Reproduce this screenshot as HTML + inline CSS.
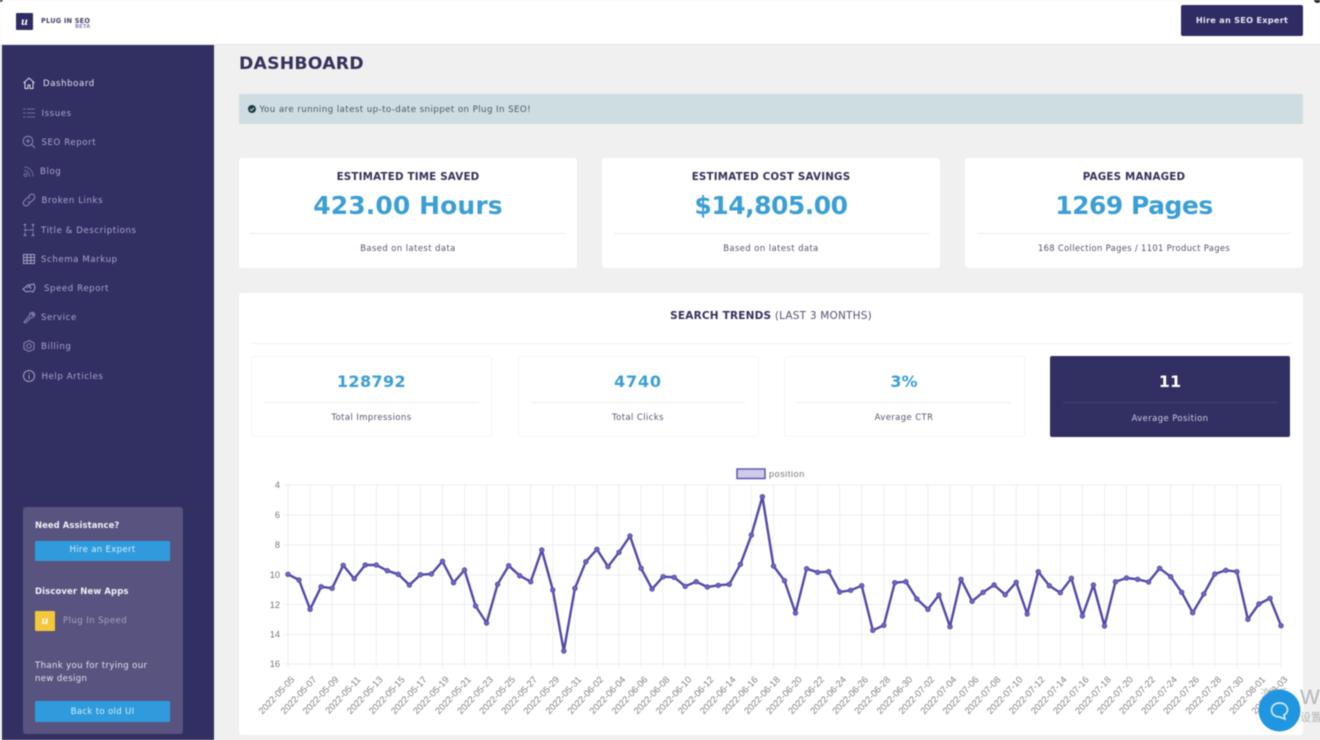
<!DOCTYPE html>
<html lang="en"><head><meta charset="utf-8"><title>Dashboard</title>
<style>
*{box-sizing:border-box}
html,body{margin:0;padding:0;width:1320px;height:740px;overflow:hidden;background:#f0f0f0}
#w{position:relative;width:1320px;height:740px;overflow:hidden;background:#f0f0f0;font-family:"DejaVu Sans","Liberation Sans",sans-serif;filter:blur(.5px)}
.a{position:absolute}
.t{position:absolute;white-space:nowrap;line-height:14px;height:14px}
.c{text-align:center}
.card{position:absolute;background:#fff;border-radius:3px}
.hr{position:absolute;height:1px;background:#ededf0}
.m{color:#a9a7c8;font-size:8.6px;letter-spacing:.58px;font-weight:500;margin-top:1px}
.ic{position:absolute;left:22px;width:14px;height:14px;fill:none;stroke:#a3a1c2;stroke-width:1}
.ct{font-size:10.3px;font-weight:700;color:#35325c;letter-spacing:.2px}
.val{font-size:25px;font-weight:700;color:#3c9fd4;line-height:30px;height:30px;letter-spacing:.1px}
.sub{font-size:8.4px;color:#55536f;letter-spacing:.45px}
.mc{position:absolute;top:356px;width:241px;height:81px;border:1px solid #f5f5f7;border-radius:3px;background:#fff}
.mv{font-size:16px;font-weight:700;color:#3c9fd4;line-height:20px;height:20px;letter-spacing:.1px}
.btn{position:absolute;background:#2f9bdc;border-radius:1px;color:#d4ecf8;font-size:8.6px;text-align:center;letter-spacing:.3px}
</style></head><body>
<div id="w">
<!-- header -->
<div class="a" style="left:0;top:0;width:1320px;height:45px;background:#fff;border-bottom:1px solid #e8e8ec"></div>
<div class="a" style="left:16px;top:13px;width:17px;height:17px;background:#2f2b63;border-radius:1px;color:#fff;font:italic 700 12px/16px 'Liberation Serif',serif;text-align:center">u</div>
<div class="t" style="left:41px;top:14px;font-size:6.6px;font-weight:700;color:#45436a;letter-spacing:.2px">PLUG IN SEO</div>
<div class="t" style="left:75px;top:20px;font-size:5.200px;font-weight:700;color:#8a86b8;letter-spacing:.2px">BETA</div>
<div class="a" style="left:1181px;top:5px;width:122px;height:31px;background:#2f2b63;border-radius:2px;color:#e7e6f2;font-size:8.200px;font-weight:700;text-align:center;line-height:31px;letter-spacing:.25px">Hire an SEO Expert</div>
<div class="a" style="left:1314px;top:-3px;width:7px;height:6px;background:#222;border-radius:50%"></div>
<div class="a" style="left:-3px;top:-3px;width:6px;height:5px;background:#222;border-radius:50%"></div>

<!-- sidebar -->
<div class="a" style="left:2px;top:45px;width:211.500px;height:695px;background:#322f63"></div>
<svg class="ic" style="top:76px;stroke:#dcdbe9" viewBox="0 0 14 14"><path d="M1.500 7 7 2l5.500 5M3 6v6.500h3V9h2v3.500h3V6"/></svg>
<div class="t m" style="left:43px;top:76px;color:#e4e3ef">Dashboard</div>
<svg class="ic" style="top:106px;stroke:#6f6c9c" viewBox="0 0 14 14"><path d="M5 3h8M5 7h8M5 11h8M1 3h2.500M1 7h2.500M1 11h2.500"/></svg>
<div class="t m" style="left:41.500px;top:106px">Issues</div>
<svg class="ic" style="top:135px;stroke:#8d8ab2" viewBox="0 0 14 14"><circle cx="6" cy="6" r="4.800"/><path d="m9.500 9.500 3.500 3.500M4 6h4M6 4v4"/></svg>
<div class="t m" style="left:41.500px;top:135px">SEO Report</div>
<svg class="ic" style="top:164px;stroke:#6f6c9c" viewBox="0 0 14 14"><path d="M2 3a9 9 0 0 1 9 9.500M2 6.500a5.500 5.500 0 0 1 5.500 6"/><circle cx="3.500" cy="11" r="1.500"/></svg>
<div class="t m" style="left:40px;top:164px">Blog</div>
<svg class="ic" style="top:193px;stroke:#8d8ab2" viewBox="0 0 14 14"><path d="m6 4 2-2a2.500 2.500 0 0 1 4 4L9.500 8.500a2.500 2.500 0 0 1-3.500 0M8 10l-2 2a2.500 2.500 0 0 1-4-4l2.500-2.500a2.500 2.500 0 0 1 3.500 0"/></svg>
<div class="t m" style="left:41.500px;top:193px">Broken Links</div>
<svg class="ic" style="top:222.500px;stroke:#8d8ab2" viewBox="0 0 14 14"><path d="M3 1.500v11M11 1.500v11M3 7h8M1.500 1.500h3M9.500 1.500h3M1.500 12.500h3M9.500 12.500h3" stroke-dasharray="3 1"/></svg>
<div class="t m" style="left:41px;top:222.500px">Title &amp; Descriptions</div>
<svg class="ic" style="top:251.500px;stroke:#a3a1c2" viewBox="0 0 14 14"><path d="M1.500 2.500h11v9h-11zM1.500 5.500h11M1.500 8.500h11M5 2.500v9M8.800 2.500v9"/></svg>
<div class="t m" style="left:41px;top:251.500px">Schema Markup</div>
<svg class="ic" style="top:281px;stroke:#a3a1c2" viewBox="0 0 14 14"><path d="M1 8c2-1 3-3 5-4l6-1 1 4-2 4-3-1-3 1-2-1zM5 7l3-2 1 3"/></svg>
<div class="t m" style="left:44px;top:281px">Speed Report</div>
<svg class="ic" style="top:310px;stroke:#8d8ab2" viewBox="0 0 14 14"><path d="m2 12 5.500-6a3 3 0 0 1 4-3.500L9.500 4.500l1 1 2-2A3 3 0 0 1 9 7.500L3.500 13z"/></svg>
<div class="t m" style="left:41px;top:310px">Service</div>
<svg class="ic" style="top:339px;stroke:#8d8ab2" viewBox="0 0 14 14"><path d="M7 1.500 12 4v6l-5 2.500L2 10V4z"/><circle cx="7" cy="7" r="2.200"/></svg>
<div class="t m" style="left:41px;top:339px">Billing</div>
<svg class="ic" style="top:368.500px;stroke:#a3a1c2" viewBox="0 0 14 14"><circle cx="7" cy="7" r="5.500"/><path d="M7 6v4M7 4v1"/></svg>
<div class="t m" style="left:41.500px;top:368.500px">Help Articles</div>

<!-- sidebar box -->
<div class="a" style="left:23px;top:507px;width:160px;height:227px;background:#58547f;border-radius:3px"></div>
<div class="t" style="left:35px;top:518px;font-size:8.400px;font-weight:700;color:#f0f0f6;letter-spacing:.1px">Need Assistance?</div>
<div class="btn" style="left:35px;top:541px;width:135px;height:20px;line-height:19px">Hire an Expert</div>
<div class="t" style="left:35px;top:585px;font-size:8.500px;font-weight:700;color:#f0f0f6;letter-spacing:.1px">Discover New Apps</div>
<div class="a" style="left:35px;top:611px;width:20px;height:20px;background:#f3c93b;border-radius:1px;color:#fff;font:italic 700 12px/19px 'Liberation Serif',serif;text-align:center">u</div>
<div class="t" style="left:63px;top:613.500px;font-size:8.600px;color:#a5a3bd;letter-spacing:.4px">Plug In Speed</div>
<div class="t" style="left:35px;top:659px;font-size:8.600px;color:#e2e1ec;letter-spacing:.33px">Thank you for trying our</div>
<div class="t" style="left:35px;top:672px;font-size:8.600px;color:#e2e1ec;letter-spacing:.33px">new design</div>
<div class="btn" style="left:35px;top:701px;width:135px;height:21px;line-height:22px">Back to old UI</div>

<!-- main -->
<div class="t" style="left:239px;top:53.500px;height:20px;line-height:20px;font-size:17.300px;font-weight:700;color:#35325c;letter-spacing:.2px">DASHBOARD</div>
<div class="a" style="left:239px;top:94px;width:1064px;height:30px;background:#cddde2;border-radius:2px"></div>
<div class="a" style="left:248px;top:105px;width:8px;height:8px;border-radius:50%;background:#1d3b42"></div>
<svg class="a" style="left:248px;top:105px" width="8" height="8" viewBox="0 0 8 8"><path d="M2 4.200 3.500 5.500 6 2.800" fill="none" stroke="#cddde2" stroke-width="1"/></svg>
<div class="t" style="left:259.500px;top:103px;font-size:8.700px;color:#4b5a62;letter-spacing:.4px">You are running latest up-to-date snippet on Plug In SEO!</div>

<div class="card" style="left:239px;top:158px;width:338px;height:110px"></div>
<div class="card" style="left:602px;top:158px;width:338px;height:110px"></div>
<div class="card" style="left:965px;top:158px;width:338px;height:110px"></div>
<div class="t c ct" style="left:239px;width:338px;top:169.500px">ESTIMATED TIME SAVED</div>
<div class="t c ct" style="left:602px;width:338px;top:169.500px">ESTIMATED COST SAVINGS</div>
<div class="t c ct" style="left:965px;width:338px;top:169.500px">PAGES MANAGED</div>
<div class="t c val" style="left:239px;width:338px;top:191px">423.00 Hours</div>
<div class="t c val" style="left:602px;width:338px;top:191px;letter-spacing:-.5px">$14,805.00</div>
<div class="t c val" style="left:965px;width:338px;top:191px;letter-spacing:-.5px">1269 Pages</div>
<div class="hr" style="left:250px;top:233px;width:315px"></div>
<div class="hr" style="left:614px;top:233px;width:315px"></div>
<div class="hr" style="left:977px;top:233px;width:314px"></div>
<div class="t c sub" style="left:239px;width:338px;top:241px">Based on latest data</div>
<div class="t c sub" style="left:602px;width:338px;top:241px">Based on latest data</div>
<div class="t c sub" style="left:965px;width:338px;top:241px;letter-spacing:.33px">168 Collection Pages / 1101 Product Pages</div>

<div class="card" style="left:239px;top:293px;width:1064px;height:442px"></div>
<div class="t c" style="left:239px;width:1064px;top:308.500px;font-size:10.500px;color:#55536f;letter-spacing:.2px"><b style="color:#35325c">SEARCH TRENDS</b> (LAST 3 MONTHS)</div>
<div class="hr" style="left:251px;top:343px;width:1039px;background:#f1f1f3"></div>

<div class="mc" style="left:251px"></div>
<div class="mc" style="left:517.500px"></div>
<div class="mc" style="left:783.500px"></div>
<div class="a" style="left:1050px;top:356px;width:240px;height:81px;background:#322f63;border-radius:2px"></div>
<div class="t c mv" style="left:251px;width:241px;top:371.500px;letter-spacing:.4px">128792</div>
<div class="t c mv" style="left:517.500px;width:241px;top:371.500px;letter-spacing:.8px">4740</div>
<div class="t c mv" style="left:783.500px;width:241px;top:371.500px">3%</div>
<div class="t c mv" style="left:1050px;width:240px;top:371.500px;color:#fff">11</div>
<div class="hr" style="left:264px;top:402px;width:215px"></div>
<div class="hr" style="left:531px;top:402px;width:214px"></div>
<div class="hr" style="left:796px;top:402px;width:215px"></div>
<div class="hr" style="left:1063px;top:402px;width:215px;background:#45426f"></div>
<div class="t c sub" style="left:251px;width:241px;top:410px">Total Impressions</div>
<div class="t c sub" style="left:517.500px;width:241px;top:410px">Total Clicks</div>
<div class="t c sub" style="left:783.500px;width:241px;top:410px">Average CTR</div>
<div class="t c sub" style="left:1050px;width:240px;top:411px;color:#cfcde2">Average Position</div>

<!-- windows activation ghost text -->
<div class="t" style="left:1260px;top:686px;height:18px;line-height:18px;font-family:'Liberation Sans','Noto Sans CJK SC',sans-serif;font-size:14px;color:#bdbdc0">激活</div>
<div class="t" style="left:1300px;top:686px;height:24px;line-height:24px;font-family:'Liberation Sans',sans-serif;font-size:21px;color:#b5b5b8">Wi</div>
<div class="t" style="left:1300px;top:711px;font-family:'Liberation Sans','Noto Sans CJK SC',sans-serif;font-size:11px;color:#b5b5b8">设置</div>

<!-- chart -->
<svg class="a" style="left:0;top:0" width="1320" height="740" viewBox="0 0 1320 740">
<defs><marker id="d" markerUnits="userSpaceOnUse" markerWidth="6" markerHeight="6" refX="3" refY="3"><circle cx="3" cy="3" r="2.300" fill="#6e66c0" stroke="#5249a8" stroke-width=".8"/></marker></defs>
<rect x="737" y="469" width="28" height="9.500" fill="#cfcbe8" stroke="#5f57b3" stroke-width="1.500"/>
<text x="769" y="477" font-family="'Liberation Sans',sans-serif" font-size="9" letter-spacing=".6" fill="#777">position</text>
<g stroke="#eeeef0" stroke-width="1" fill="none">
<path d="M284 485H1281M284 515H1281M284 545H1281M284 575H1281M284 604.500H1281M284 634.500H1281M284 664H1281"/>
<path d="M288 485V668M310.100 485V668M332.100 485V668M354.200 485V668M376.300 485V668M398.300 485V668M420.400 485V668M442.500 485V668M464.500 485V668M486.600 485V668M508.700 485V668M530.700 485V668M552.800 485V668M574.900 485V668M596.900 485V668M619 485V668M641.100 485V668M663.100 485V668M685.200 485V668M707.300 485V668M729.300 485V668M751.400 485V668M773.500 485V668M795.500 485V668M817.600 485V668M839.700 485V668M861.700 485V668M883.800 485V668M905.900 485V668M927.900 485V668M950 485V668M972.100 485V668M994.100 485V668M1016.200 485V668M1038.300 485V668M1060.300 485V668M1082.400 485V668M1104.500 485V668M1126.500 485V668M1148.600 485V668M1170.700 485V668M1192.700 485V668M1214.800 485V668M1236.900 485V668M1258.900 485V668M1281 485V668"/>
</g>
<g font-family="'Liberation Sans',sans-serif" font-size="9.200" fill="#777" text-anchor="end">
<text x="280" y="488">4</text><text x="280" y="518">6</text><text x="280" y="548">8</text><text x="280" y="578">10</text><text x="280" y="608">12</text><text x="280" y="637.500">14</text><text x="280" y="667">16</text>
</g>
<polyline fill="none" stroke="#5249a8" stroke-width="2.400" stroke-linejoin="round" marker-start="url(#d)" marker-mid="url(#d)" marker-end="url(#d)" points="288,574.300 299,580 310.100,609.300 321.100,586.700 332.100,588.300 343.200,565.300 354.200,578.700 365.200,565 376.300,565 387.300,570.700 398.300,574.300 409.400,585 420.400,574.700 431.400,574 442.500,561.300 453.500,582.700 464.500,570 475.600,606 486.600,623 497.600,584.300 508.700,565.700 519.700,575.700 530.700,581.700 541.800,550 552.800,590 563.800,651 574.900,588.300 585.900,561.700 596.900,549.300 608,566.700 619,552.300 630,536 641.100,568.300 652.100,589 663.100,576.700 674.200,577.300 685.200,586.300 696.200,581.700 707.300,587 718.300,585.300 729.300,584.300 740.400,564.300 751.400,535 762.400,496.700 773.500,566 784.500,580.700 795.500,613 806.600,568.700 817.600,572.300 828.600,571.700 839.700,592 850.700,590.300 861.700,585.700 872.800,630.300 883.800,625.300 894.800,582.700 905.900,581.700 916.900,599 927.900,609.300 939,595 950,626.700 961,579.300 972.100,601.300 983.100,592.300 994.100,585 1005.200,594.700 1016.200,582.300 1027.200,614 1038.300,571.700 1049.300,585.700 1060.300,592.700 1071.400,578.300 1082.400,616 1093.400,585 1104.500,626 1115.500,581.700 1126.500,578 1137.600,579.300 1148.600,582 1159.600,568.300 1170.700,576.700 1181.700,592.300 1192.700,612.700 1203.800,594 1214.800,574 1225.800,570.300 1236.900,571.700 1247.900,619.300 1258.900,604 1270,598.300 1281,625.700"/>
<g font-family="'Liberation Sans',sans-serif" font-size="9.300" fill="#808080" text-anchor="end">
<text transform="translate(295 680) rotate(-47)">2022-05-05</text>
<text transform="translate(317.100 680) rotate(-47)">2022-05-07</text>
<text transform="translate(339.100 680) rotate(-47)">2022-05-09</text>
<text transform="translate(361.200 680) rotate(-47)">2022-05-11</text>
<text transform="translate(383.300 680) rotate(-47)">2022-05-13</text>
<text transform="translate(405.300 680) rotate(-47)">2022-05-15</text>
<text transform="translate(427.400 680) rotate(-47)">2022-05-17</text>
<text transform="translate(449.500 680) rotate(-47)">2022-05-19</text>
<text transform="translate(471.500 680) rotate(-47)">2022-05-21</text>
<text transform="translate(493.600 680) rotate(-47)">2022-05-23</text>
<text transform="translate(515.700 680) rotate(-47)">2022-05-25</text>
<text transform="translate(537.700 680) rotate(-47)">2022-05-27</text>
<text transform="translate(559.800 680) rotate(-47)">2022-05-29</text>
<text transform="translate(581.900 680) rotate(-47)">2022-05-31</text>
<text transform="translate(603.900 680) rotate(-47)">2022-06-02</text>
<text transform="translate(626 680) rotate(-47)">2022-06-04</text>
<text transform="translate(648.100 680) rotate(-47)">2022-06-06</text>
<text transform="translate(670.100 680) rotate(-47)">2022-06-08</text>
<text transform="translate(692.200 680) rotate(-47)">2022-06-10</text>
<text transform="translate(714.300 680) rotate(-47)">2022-06-12</text>
<text transform="translate(736.300 680) rotate(-47)">2022-06-14</text>
<text transform="translate(758.400 680) rotate(-47)">2022-06-16</text>
<text transform="translate(780.500 680) rotate(-47)">2022-06-18</text>
<text transform="translate(802.500 680) rotate(-47)">2022-06-20</text>
<text transform="translate(824.600 680) rotate(-47)">2022-06-22</text>
<text transform="translate(846.700 680) rotate(-47)">2022-06-24</text>
<text transform="translate(868.700 680) rotate(-47)">2022-06-26</text>
<text transform="translate(890.800 680) rotate(-47)">2022-06-28</text>
<text transform="translate(912.900 680) rotate(-47)">2022-06-30</text>
<text transform="translate(934.900 680) rotate(-47)">2022-07-02</text>
<text transform="translate(957 680) rotate(-47)">2022-07-04</text>
<text transform="translate(979.100 680) rotate(-47)">2022-07-06</text>
<text transform="translate(1001.100 680) rotate(-47)">2022-07-08</text>
<text transform="translate(1023.200 680) rotate(-47)">2022-07-10</text>
<text transform="translate(1045.300 680) rotate(-47)">2022-07-12</text>
<text transform="translate(1067.300 680) rotate(-47)">2022-07-14</text>
<text transform="translate(1089.400 680) rotate(-47)">2022-07-16</text>
<text transform="translate(1111.500 680) rotate(-47)">2022-07-18</text>
<text transform="translate(1133.500 680) rotate(-47)">2022-07-20</text>
<text transform="translate(1155.600 680) rotate(-47)">2022-07-22</text>
<text transform="translate(1177.700 680) rotate(-47)">2022-07-24</text>
<text transform="translate(1199.700 680) rotate(-47)">2022-07-26</text>
<text transform="translate(1221.800 680) rotate(-47)">2022-07-28</text>
<text transform="translate(1243.900 680) rotate(-47)">2022-07-30</text>
<text transform="translate(1265.900 680) rotate(-47)">2022-08-01</text>
<text transform="translate(1288 680) rotate(-47)">2022-08-03</text>
</g>
<circle cx="1279.500" cy="710.500" r="21" fill="#2196e0"/>
<path d="M1279.500 703c-5 0-8 3.200-8 7s3 7 8 7l5.500 2-1-4c2.200-1.200 3.500-3 3.500-5 0-3.800-3-7-8-7z" fill="none" stroke="#cfe9f9" stroke-width="1.700"/>
</svg>
</div>
</body></html>
